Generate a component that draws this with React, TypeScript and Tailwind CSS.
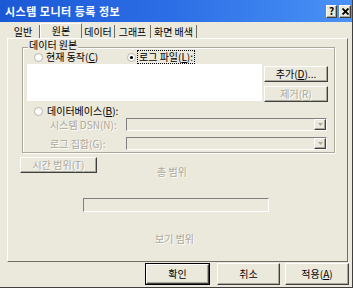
import React from "react";

const font = "font-['Noto_Sans_CJK_KR','Liberation_Sans',sans-serif]";
const dis = "text-[#aca899] [text-shadow:1px_1px_0_#ffffff]";
const raised =
  "border border-t-white border-l-white border-r-[#404040] border-b-[#404040] [box-shadow:inset_-1px_-1px_0_#aca899]";
const sunken = "border border-t-[#808080] border-l-[#808080] border-r-white border-b-white";

function Radio({ checked = false }: { checked?: boolean }) {
  return (
    <svg width="9" height="9" viewBox="0 0 9 9" className="shrink-0">
      <circle cx="4.5" cy="4.5" r="4" fill="#ffffff" stroke="#b8b4a8" strokeWidth="1" />
      {checked && <circle cx="4.5" cy="4.5" r="1.6" fill="#000000" />}
    </svg>
  );
}

function Combo() {
  return (
    <div className={`flex h-[13px] w-[201px] ${sunken}`}>
      <div className="flex-1" />
      <div className={`flex w-[12px] items-center justify-center ${raised}`}>
        <svg width="5" height="3" viewBox="0 0 5 3">
          <path d="M0 0h5L2.5 3z" fill="#aca899" />
        </svg>
      </div>
    </div>
  );
}

function Btn({ children, w, disabled = false, isDefault = false }: { children: React.ReactNode; w: string; disabled?: boolean; isDefault?: boolean }) {
  return (
    <div className={`flex items-center justify-center ${w} ${isDefault ? "border border-black" : ""}`}>
      <div className={`flex h-full w-full items-center justify-center ${raised} ${disabled ? dis : "text-black"}`}>
        {children}
      </div>
    </div>
  );
}

const tabs = [
  { label: "일반", w: "w-[33px]" },
  { label: "원본", w: "w-[42px]", active: true },
  { label: "데이터", w: "w-[33px]" },
  { label: "그래프", w: "w-[36px]" },
  { label: "화면 배색", w: "w-[46px]" },
];

export default function App() {
  return (
    <div className={`flex h-[288px] w-[353px] flex-col border-r border-b border-[#404040] bg-[#ebe8dc] text-[10px] leading-none ${font}`}>
      {/* Title bar */}
      <div className="flex h-[22px] items-center justify-between bg-gradient-to-r from-[#1b58d6] via-[#2d6fe6] to-[#4a92f6] pl-[5px] pr-[1px]">
        <span className="text-[11px] font-bold tracking-[0.5px] text-white">시스템 모니터 등록 정보</span>
        <div className="flex gap-[2px]">
          <div className={`flex h-[13px] w-[11px] items-center justify-center bg-[#ebe8dc] text-[10px] font-bold text-black ${raised}`}>?</div>
          <div className={`flex h-[13px] w-[12px] items-center justify-center bg-[#ebe8dc] ${raised}`}>
            <svg width="7" height="7" viewBox="0 0 7 7">
              <path d="M0.5 0.5L6.5 6.5M6.5 0.5L0.5 6.5" stroke="#000" strokeWidth="1.8" />
            </svg>
          </div>
        </div>
      </div>

      {/* Tabs */}
      <div className="flex h-[16px] items-end pl-[7px]">
        {tabs.map((t) => (
          <div
            key={t.label}
            className={`flex ${t.w} items-center justify-center border-r border-[#716f64] text-black ${
              t.active ? "h-[15px] border-t border-l border-t-white border-l-white" : "h-[13px]"
            }`}
          >
            {t.label}
          </div>
        ))}
      </div>

      {/* Panel */}
      <div className="mx-[7px] flex h-[224px] w-[341px] flex-col border border-t-white border-l-white border-r-[#716f64] border-b-[#716f64]">
        {/* Group box */}
        <div className="ml-[14px] mt-[8px] flex h-[106px] w-[313px] flex-col border border-[#aca899] [box-shadow:inset_1px_1px_0_#fff,1px_1px_0_#fff]">
          <div className="-mt-[9px] ml-[5px] flex h-[12px] w-fit items-center bg-[#ebe8dc] px-[1px] text-black">데이터 원본</div>

          <div className="mt-[1px] flex h-[10px] items-center pl-[11px]">
            <div className="flex w-[93px] items-center gap-[3px]">
              <Radio />
              <span>
                현재 동작(<u>C</u>)
              </span>
            </div>
            <div className="flex items-center gap-[1px]">
              <Radio checked />
              <span className="border border-dotted border-black p-[1px]">
                로그 파일(<u>L</u>):
              </span>
            </div>
          </div>

          <div className="mt-[2px] flex h-[38px] pl-[4px]">
            <div className="h-[37px] w-[235px] bg-white" />
            <div className="ml-[2px] mt-[2px] flex flex-col gap-[4px]">
              <Btn w="w-[64px] h-[16px]">
                추가(<u>D</u>)...
              </Btn>
              <Btn w="w-[64px] h-[16px]" disabled>
                제거(R)
              </Btn>
            </div>
          </div>

          <div className="mt-[4px] flex h-[10px] items-center gap-[4px] pl-[11px]">
            <Radio />
            <span>
              데이터베이스(<u>B</u>):
            </span>
          </div>

          <div className="mt-[2px] flex items-center pl-[27px]">
            <span className={`w-[76px] ${dis}`}>시스템 DSN(N):</span>
            <Combo />
          </div>
          <div className="mt-[6px] flex items-center pl-[27px]">
            <span className={`w-[76px] ${dis}`}>로그 집합(G):</span>
            <Combo />
          </div>
        </div>

        {/* Time range */}
        <div className="ml-[12px] mt-[4px] flex h-[20px] items-start">
          <Btn w="w-[77px] h-[16px]" disabled>
            시간 범위(T)
          </Btn>
          <span className={`ml-[60px] mt-[10px] ${dis}`}>총 범위</span>
        </div>

        <div className={`ml-[75px] mt-[21px] h-[14px] w-[186px] ${sunken}`} />

        <span className={`ml-[147px] mt-[22px] ${dis}`}>보기 범위</span>
      </div>

      {/* Bottom buttons */}
      <div className="mt-[1px] flex h-[22px] pl-[145px]">
        <Btn w="w-[65px] h-[22px]" isDefault>
          확인
        </Btn>
        <div className="ml-[7px]">
          <Btn w="w-[63px] h-[22px]">취소</Btn>
        </div>
        <div className="ml-[5px]">
          <Btn w="w-[64px] h-[22px]">
            적용(<u>A</u>)
          </Btn>
        </div>
      </div>
    </div>
  );
}
